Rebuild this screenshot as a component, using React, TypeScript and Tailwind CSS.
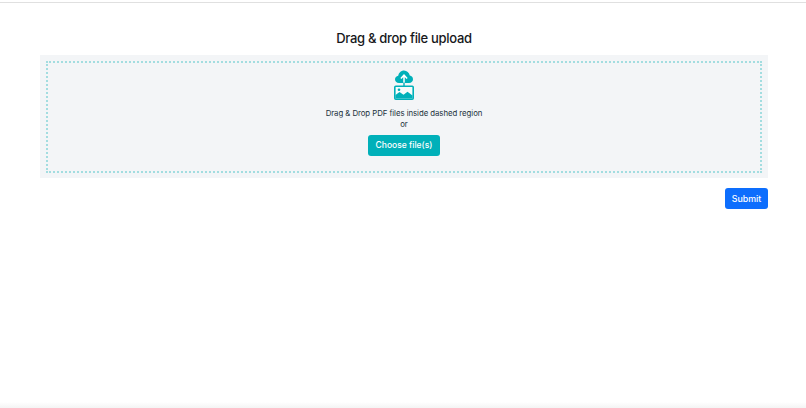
import React from 'react';

const UploadIcon = () => (
  <svg width="20" height="30" viewBox="0 0 20 30" fill="none">
    <path
      d="M5 13C2.4 13 1 11.3 1 9.3 1 7.4 2.4 5.9 4.2 5.7 4.8 2.5 7.2 0.4 10 0.4 12.9 0.4 15.2 2.5 15.8 5.6 17.7 5.8 19 7.4 19 9.3 19 11.3 17.6 13 15 13Z"
      fill="#00b0b9"
    />
    <path d="M10 13V5.4M6.9 8.4 10 5.2 13.1 8.4" stroke="#fff" strokeWidth="1.5" />
    <path d="M10 12.5V16.5" stroke="#00b0b9" strokeWidth="1.4" />
    <rect x="0.8" y="16.3" width="18.4" height="12.9" rx="1" stroke="#00b0b9" strokeWidth="1.6" fill="#f7fbfb" />
    <path d="M1.5 28.5V25L5.5 22 9.5 24.8 13.5 21.8 18.5 25.5V28.5Z" fill="#00b0b9" />
    <circle cx="5" cy="19.8" r="1.3" fill="#00b0b9" />
  </svg>
);

export default function App() {
  return (
    <div className="min-h-[408px] bg-white font-['Inter',sans-serif] relative overflow-hidden">
      <div className="pt-[2px]">
        <div className="h-[1px] bg-[#e0e0e0]" />
      </div>
      <div className="pl-10 pr-[38px]">
        <h1 className="mt-[26px] text-center text-[13px] leading-[18px] tracking-[-0.3px] font-medium text-[#16181b]">
          Drag &amp; drop file upload
        </h1>
        <div className="mt-[8px] h-[123px] bg-[#f3f5f7] p-[6px]">
          <div className="h-[112px] border-2 border-dotted border-[#a3dde0] flex flex-col items-center pt-[7px]">
            <UploadIcon />
            <p className="mt-[8px] text-[7.8px] leading-[11px] tracking-[-0.05px] text-[#22323c]">
              Drag &amp; Drop PDF files inside dashed region
            </p>
            <p className="text-[7.8px] leading-[11px] text-[#22323c]">or</p>
            <button className="mt-[5px] w-[72px] h-[21px] rounded-[3px] bg-[#00b0b9] text-white text-[8.5px] font-medium">
              Choose file(s)
            </button>
          </div>
        </div>
        <div className="mt-[10px] flex justify-end">
          <button className="w-[43px] h-[21px] rounded-[3px] bg-[#0d6efd] text-white text-[8.8px] font-medium">
            Submit
          </button>
        </div>
      </div>
      <div className="absolute bottom-0 left-0 right-0 h-[6px] bg-gradient-to-b from-white to-[#f4f4f4]" />
    </div>
  );
}
